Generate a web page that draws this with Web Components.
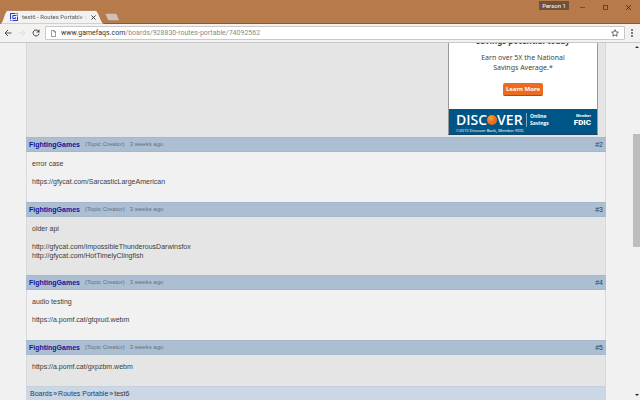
<!DOCTYPE html>
<html lang="en">
<head>
<meta charset="utf-8">
<title>test6 - Routes Portable</title>
<style>
html,body{height:100%;margin:0}
body{font-family:"Liberation Sans",Arial,sans-serif;font-size:7px;color:#444;overflow:hidden}
</style>
</head>
<body>
<browser-window>
  <browser-tabs slot="chrome" label="test6 - Routes Portable I" user="Person 1"></browser-tabs>
  <browser-toolbar slot="chrome" host="www.gamefaqs.com" path="/boards/928830-routes-portable/74092562"></browser-toolbar>
  <savings-ad slot="ad"></savings-ad>
  <forum-post number="#2">error case

https://gfycat.com/SarcasticLargeAmerican</forum-post>
  <forum-post number="#3" shaded>older api

http://gfycat.com/ImpossibleThunderousDarwinsfox
http://gfycat.com/HotTimelyClingfish</forum-post>
  <forum-post number="#4">audio testing

https://a.pomf.cat/gtqxud.webm</forum-post>
  <forum-post number="#5" shaded compact>https://a.pomf.cat/gxpzbm.webm</forum-post>
  <bread-crumbs></bread-crumbs>
  <scroll-track slot="scroll"></scroll-track>
</browser-window>
<script>
class Base extends HTMLElement{
  connectedCallback(){
    if(!this.shadowRoot) this.attachShadow({mode:'open'}).innerHTML='<style>:host,*{box-sizing:border-box}button{all:unset;box-sizing:border-box;display:flex;align-items:center;justify-content:center}svg{display:block}a{color:inherit;text-decoration:none}</style>'+this.view();
  }
}
customElements.define('browser-window',class extends Base{view(){return `
<style>
:host{display:flex;flex-direction:column;height:100vh;background:#f1f1f1}
.view{flex:1;min-height:0;display:flex;border-top:1px solid #c8c8c8}
.page{flex:1;min-width:0;overflow:hidden;padding:0 27px 0 26px}
.col{background:#e5e5e5;min-height:100%}
.lead{height:94px;display:flex;justify-content:flex-end;align-items:flex-end;overflow:hidden;padding:0 7px 2px 0;border:solid #d3d5d8;border-width:0 1px}
</style>
<slot name="chrome"></slot>
<div class="view"><main class="page"><div class="col"><div class="lead"><slot name="ad"></slot></div><slot></slot></div></main><slot name="scroll"></slot></div>`}});

customElements.define('browser-tabs',class extends Base{view(){return `
<style>
:host{display:flex;height:24px;background:#b67a4b;border-bottom:1px solid #985621;font-family:Roboto,"Noto Sans",sans-serif}
.tab{position:relative;display:flex;align-items:center;width:104px;height:14px;margin-top:10px;padding:0 8px 0 10px;gap:4px;color:#555}
.tab>*{position:relative}
.tab .shape{position:absolute;inset:0;width:100%;height:100%}
.label{flex:1;white-space:nowrap;font-size:6px;line-height:10px;-webkit-mask-image:linear-gradient(90deg,#000 85%,transparent)}
.new{margin:13px 0 0;width:16px;height:8px}
.grow{flex:1}
.user{width:30px;height:9px;background:#735038;color:#fff;font-size:6px;line-height:9px;margin-top:1px;margin-right:2px}
.win{width:23px;height:14px}
</style>
<div class="tab"><svg class="shape" viewBox="0 0 104 14" preserveAspectRatio="none"><path d="M0 14 C3 13 4 3 7 0.5 H96 C99 2 101 13 104 14Z" fill="#f3f2f1" stroke="#955d31" stroke-width=".5"/></svg>
<svg width="8" height="8" viewBox="0 0 8 8"><rect x=".4" y=".4" width="7.200" height="7.200" fill="#eceeff" stroke="#7b84e6" stroke-width=".8"/><path d="M.5 6V.5H5M6.500 2.500H2.800V5.500H5.500V4.200M3 7.500H7.500V4" fill="none" stroke="#3138c8" stroke-width="1"/></svg>
<span class="label">${this.getAttribute('label')}</span>
<button aria-label="Close tab"><svg width="5" height="5" viewBox="0 0 5 5"><path d="M.5.5l4 4m0-4l-4 4" stroke="#333" stroke-width="1"/></svg></button></div>
<button class="new" aria-label="New tab"><svg width="16" height="8" viewBox="0 0 16 8"><path d="M1 .5h10.500q1 0 1.400 1l2.400 6H5q-1 0-1.400-1Z" fill="#d1c0b3" stroke="#a58163" stroke-width=".5"/></svg></button>
<span class="grow"></span>
<button class="user">${this.getAttribute('user')}</button>
<button class="win" aria-label="Minimize"><svg width="5" height="5"><path d="M0 2.500h5" stroke="#583921" stroke-width=".7"/></svg></button>
<button class="win" aria-label="Maximize"><svg width="5" height="5"><rect x=".5" y=".5" width="4" height="4" fill="none" stroke="#583921" stroke-width=".8"/></svg></button>
<button class="win" aria-label="Close"><svg width="5" height="5"><path d="M0 0l5 5M5 0L0 5" stroke="#39230f" stroke-width=".8"/></svg></button>`}});

customElements.define('browser-toolbar',class extends Base{view(){return `
<style>
:host{display:flex;align-items:center;height:18px;padding:0 4px 0 1px;background:#f3f2f1;font-family:Roboto,"Noto Sans",sans-serif}
.nav{width:14px;height:14px}
.bar{flex:1;display:flex;align-items:center;height:14px;margin-left:2px;padding:0 5px;gap:5px;background:#fff;border:1px solid #c9c9c9;border-radius:1px}
.url{flex:1;font-size:7px;line-height:10px;color:#8a8a8a;white-space:nowrap}
b{font-weight:400;color:#333}
.more{width:9px;height:14px;margin-left:2px}
</style>
<button class="nav" aria-label="Back"><svg width="8" height="8" viewBox="0 0 8 8" fill="none" stroke="#555"><path d="M7.500 4H1M4 1L1 4l3 3"/></svg></button>
<button class="nav" aria-label="Forward"><svg width="8" height="8" viewBox="0 0 8 8" fill="none" stroke="#dcdcdc"><path d="M.5 4H7M4 1l3 3-3 3"/></svg></button>
<button class="nav" aria-label="Reload"><svg width="8" height="8" viewBox="0 0 8 8"><path d="M6.500 2.200A3 3 0 1 0 7 4.700" fill="none" stroke="#444"/><path d="M7.500.3v3.200H4.300Z" fill="#444"/></svg></button>
<div class="bar"><svg width="5" height="7" viewBox="0 0 5 7" fill="#fff" stroke="#666" stroke-width=".7"><path d="M.4.4h2.700l1.500 1.500v4.700H.4ZM3 .4V2h1.600"/></svg>
<a class="url" href="#"><b>${this.getAttribute('host')}</b>${this.getAttribute('path')}</a>
<button aria-label="Bookmark"><svg width="8" height="8" viewBox="0 0 8 8"><path d="M4 .7l1 2.200 2.400.3-1.800 1.600.5 2.400L4 6 1.900 7.200l.5-2.400L.6 3.200 3 2.900Z" fill="#fff" stroke="#444" stroke-width=".8"/></svg></button></div>
<button class="more" aria-label="Menu"><svg width="2" height="8" viewBox="0 0 2 8" fill="#444"><circle cx="1" cy="1" r=".9"/><circle cx="1" cy="4" r=".9"/><circle cx="1" cy="7" r=".9"/></svg></button>`}});

customElements.define('savings-ad',class extends Base{view(){return `
<style>
:host{display:block;width:150px;flex:none;background:#fff;border:1px solid #999;border-bottom-color:#14456a;font-family:"Noto Sans","Open Sans",sans-serif;text-align:center;color:#444}
h2{margin:0;font-size:8px;line-height:11px;font-weight:700;padding-bottom:7px}
p{margin:0;font-size:7px;line-height:10px}
.cta{margin:10px auto 13px;width:40px;height:13px;border-radius:2px;background:#ec6b1c;border-bottom:1px solid #aa4a15;color:#fff;font-size:6px;font-weight:700}
footer{background:#005587;color:#fff;height:25px;display:grid;grid-template-columns:70px 1fr auto;padding:4px 6px 0 7px;text-align:left}
.logo{display:flex;align-items:center;height:14px;font:600 14px/14px "Open Sans","Noto Sans",sans-serif}
.logo svg{flex:none}
.online{font-family:"Open Sans","Noto Sans",sans-serif;font-size:5px;line-height:7px;font-weight:700;border-left:1px solid #80a9c3;padding-left:3px;height:14px}
.fdic{font-family:Roboto,sans-serif;font-size:4px;line-height:5px;font-weight:700;text-align:right}
.fdic b{display:block;font-size:8px;line-height:10px}
small{grid-column:1/-1;font-size:4px;line-height:6px}
</style>
<h2>savings potential today</h2><p>Earn over 5X the National<br>Savings Average.*</p>
<button class="cta">Learn More</button>
<footer><div class="logo"><span>DISC</span><svg width="10" height="10" viewBox="0 0 10 10"><defs><radialGradient id="o" cx=".35" cy=".3"><stop stop-color="#fba03c"/><stop offset="1" stop-color="#ee6b1b"/></radialGradient></defs><circle cx="5" cy="5" r="5" fill="url(#o)"/></svg><span>VER</span></div>
<div class="online">Online<br>Savings</div><div class="fdic">Member<b>FDIC</b></div><small>©2015 Discover Bank, Member FDIC</small></footer>`}});

customElements.define('forum-post',class extends Base{view(){return `
<style>
:host{display:block;background:#f1f1f1}
:host([shaded]){background:#e5e5e5}
header{display:flex;align-items:center;height:15px;padding:0 3px;background:#abbed2;border-top:1px solid #a5b7ca;border-bottom:1px solid #a5b7ca;font-size:6px;line-height:9px;color:#65727f}
.name{font-size:7px;font-weight:700;color:#15159a;margin-right:5px}
.role{margin-right:5px}
.num{margin-left:auto;font-size:7px;color:#333e4b}
.body{min-height:50px;padding:7px 5px 15px;line-height:9px;white-space:pre-line;color:#3c3c3c;border:solid #d8dade;border-width:0 1px}
:host([compact]) .body{min-height:0}
</style>
<header><a class="name" href="#">FightingGames</a><span class="role">(Topic Creator)</span><span>3 weeks ago</span><a class="num" href="#">${this.getAttribute('number')}</a></header>
<div class="body"><slot></slot></div>`}});

customElements.define('bread-crumbs',class extends Base{view(){return `
<style>:host{display:block;background:#cbd7e4;padding:0 4px;border-top:1px solid #c5d1dd;color:#333}nav{display:flex;gap:1px;line-height:14px}a{color:#223b78}</style>
<nav><a href="#">Boards</a><span>»</span><a href="#">Routes Portable</a><span>»</span><span>test6</span></nav>`}});

customElements.define('scroll-track',class extends Base{view(){return `
<style>:host{display:flex;flex-direction:column;align-items:center;width:7px;background:#f1f1f1;padding:3px 0 4px}
.before{flex:86}.thumb{flex:112;width:7px;background:#bdbdbd}.after{flex:147}</style>
<svg width="4" height="2"><path d="M0 2l2-2 2 2Z" fill="#333"/></svg><div class="before"></div><div class="thumb"></div><div class="after"></div><svg width="4" height="2"><path d="M0 0l2 2 2-2Z" fill="#222"/></svg>`}});
</script>
</body>
</html>
